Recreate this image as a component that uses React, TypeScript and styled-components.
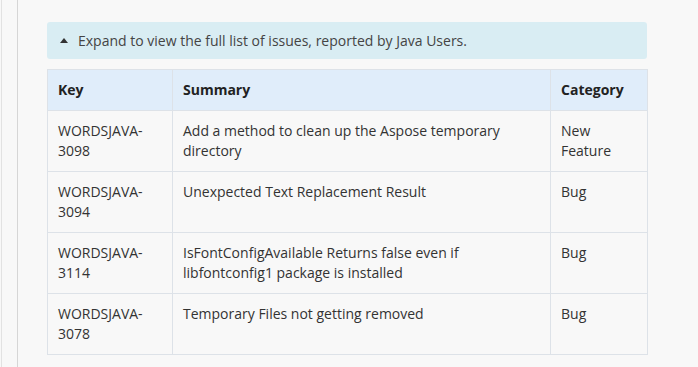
import React from "react";
import styled, { createGlobalStyle } from "styled-components";

const Global = createGlobalStyle`
  html, body { margin: 0; padding: 0; background: #f8f8f8; }
  body { font-family: "Open Sans", "Liberation Sans", sans-serif; font-size: 14px; color: #333; }
  * { box-sizing: border-box; }
`;

const Page = styled.div`
  display: flex;
  min-height: 367px;
  background: #f8f8f8;
`;

const Rail = styled.div`
  width: 17px;
  margin-left: 1px;
  border-left: 1px solid #e2e2e2;
  border-right: 1px solid #d6d6d6;
  flex-shrink: 0;
`;

const Content = styled.div`
  width: 629px;
  padding: 22px 0 0 29px;
  display: flex;
  flex-direction: column;
  gap: 10px;
`;

const Alert = styled.div`
  display: flex;
  align-items: center;
  gap: 10px;
  background: #d9edf3;
  border-radius: 3px;
  padding: 8px 13px;
  height: 37px;
  line-height: 21px;
  color: #444;
  width: 600px;
`;

const Caret = styled.span`
  width: 0;
  height: 0;
  border-left: 4px solid transparent;
  border-right: 4px solid transparent;
  border-bottom: 5px solid #333;
  margin-top: -1px;
`;

const Table = styled.table`
  border-collapse: collapse;
  width: 600px;
  table-layout: fixed;
`;

const HeadCell = styled.th<{ $w: number }>`
  width: ${(p) => p.$w}px;
  text-align: left;
  font-weight: 700;
  background: #e0edfa;
  border: 1px solid #dde2e8;
  padding: 10px 10px;
  line-height: 20px;
  color: #222;
`;

const Cell = styled.td`
  vertical-align: top;
  border: 1px solid #dde2e8;
  padding: 10px 10px;
  line-height: 20px;
  color: #333;
`;

const rows = [
  ["WORDSJAVA-3098", "Add a method to clean up the Aspose temporary directory", "New Feature"],
  ["WORDSJAVA-3094", "Unexpected Text Replacement Result", "Bug"],
  ["WORDSJAVA-3114", "IsFontConfigAvailable Returns false even if libfontconfig1 package is installed", "Bug"],
  ["WORDSJAVA-3078", "Temporary Files not getting removed", "Bug"],
];

export default function App() {
  return (
    <>
      <Global />
      <Page>
        <Rail />
        <Content>
          <Alert>
            <Caret />
            <span>Expand to view the full list of issues, reported by Java Users.</span>
          </Alert>
          <Table>
            <thead>
              <tr>
                <HeadCell $w={125}>Key</HeadCell>
                <HeadCell $w={378}>Summary</HeadCell>
                <HeadCell $w={97}>Category</HeadCell>
              </tr>
            </thead>
            <tbody>
              {rows.map((r) => (
                <tr key={r[0]}>
                  <Cell>{r[0]}</Cell>
                  <Cell>{r[1]}</Cell>
                  <Cell>{r[2]}</Cell>
                </tr>
              ))}
            </tbody>
          </Table>
        </Content>
      </Page>
    </>
  );
}
